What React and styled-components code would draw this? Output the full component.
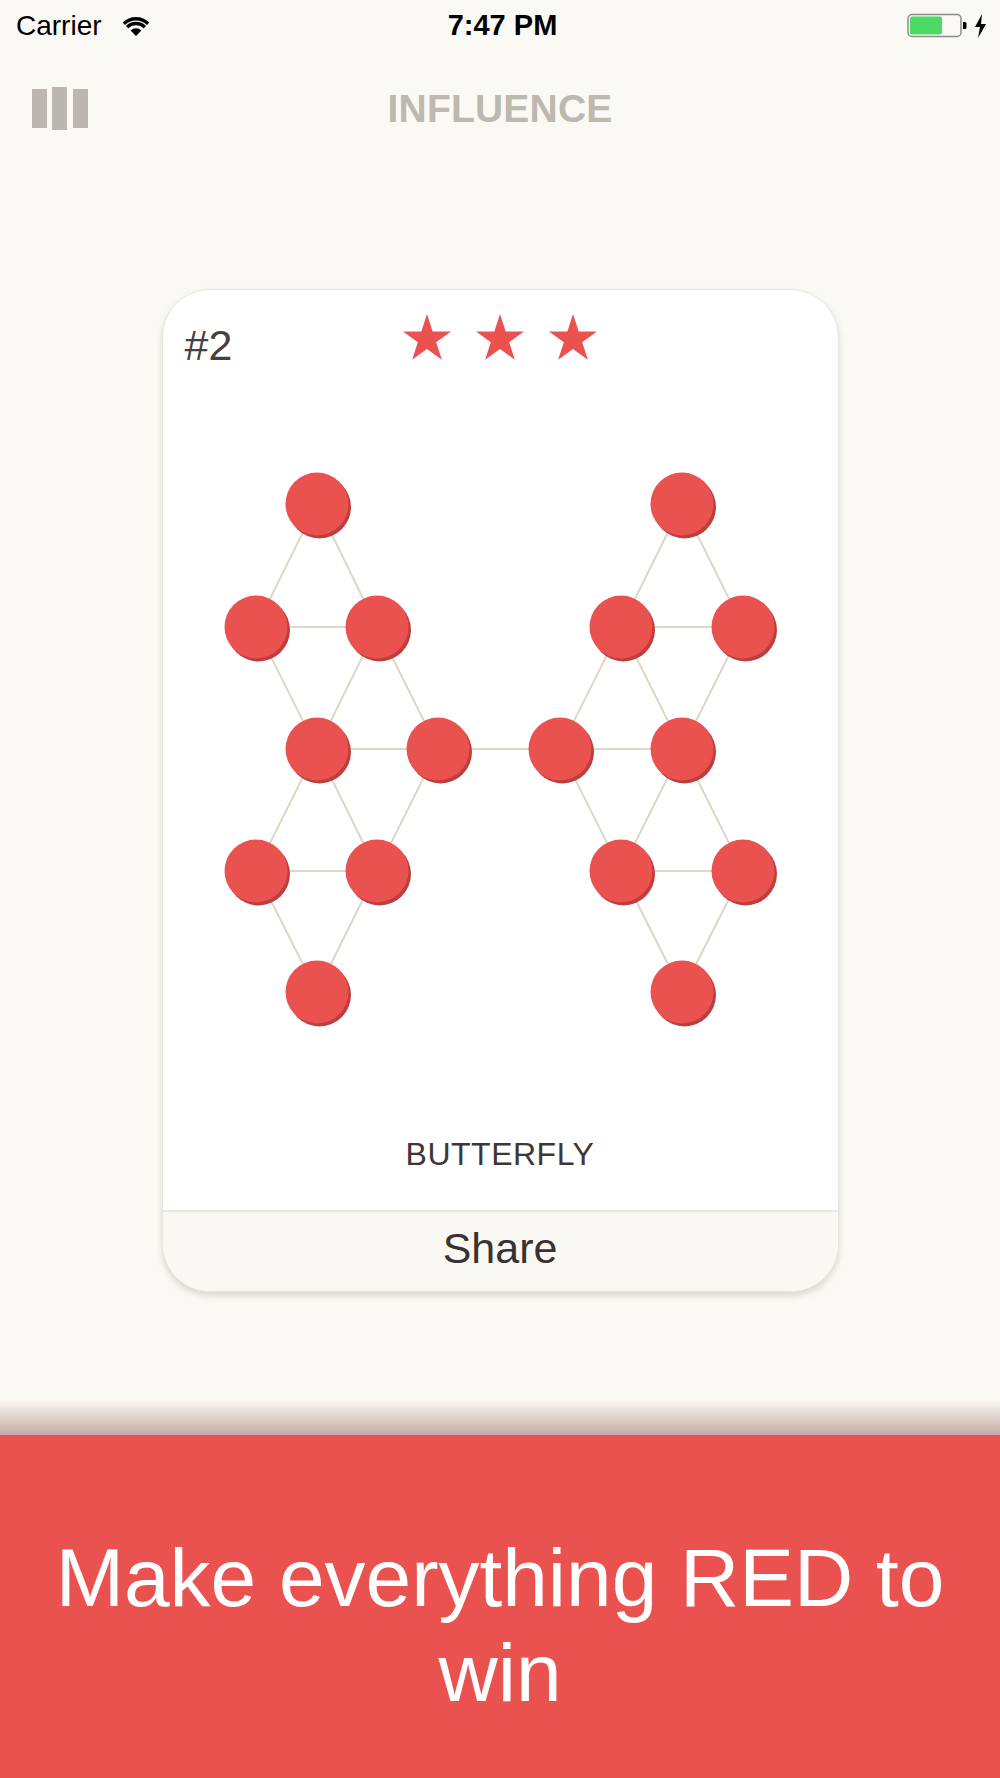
import styled, { createGlobalStyle } from 'styled-components'

const GlobalStyle = createGlobalStyle`
  html, body {
    margin: 0;
    padding: 0;
    background: #faf9f3;
  }
  body {
    font-family: 'Liberation Sans', Arial, sans-serif;
  }
`

const red = '#ea5250'

const Page = styled.div`
  width: 1000px;
  height: 1778px;
  display: flex;
  flex-direction: column;
  background: #faf9f3;
  overflow: hidden;
`

const StatusBar = styled.div`
  height: 48px;
  box-sizing: border-box;
  display: grid;
  grid-template-columns: 1fr auto 1fr;
  align-items: center;
  padding: 3px 11px 0 16px;
  color: #000;
  font-size: 28px;
`

const Carrier = styled.div`
  display: flex;
  align-items: center;
  gap: 20px;
`

const Clock = styled.div`
  font-weight: 700;
  font-size: 29px;
`

const Power = styled.div`
  display: flex;
  align-items: center;
  justify-content: flex-end;
`

const NavBar = styled.div`
  height: 122px;
  display: grid;
  grid-template-columns: 1fr auto 1fr;
  align-items: center;
  padding: 0 32px;
`

const Title = styled.h1`
  margin: 0;
  font-size: 39px;
  font-weight: 700;
  color: #bdb8b0;
  letter-spacing: 0.2px;
`

const Main = styled.main`
  flex: 1;
  display: flex;
  justify-content: center;
  padding-top: 119px;
`

const Card = styled.section`
  width: 677px;
  height: 1003px;
  box-sizing: border-box;
  display: flex;
  flex-direction: column;
  background: #fff;
  border: 1.5px solid #e8e5de;
  border-radius: 48px;
  box-shadow: 0 4px 6px rgba(60, 50, 40, 0.16);
  overflow: hidden;
`

const CardTop = styled.div`
  height: 100px;
  box-sizing: border-box;
  display: grid;
  grid-template-columns: 1fr auto 1fr;
  align-items: start;
  padding: 24px 22px 0;
`

const LevelNumber = styled.div`
  margin-top: 7px;
  font-size: 43px;
  line-height: 48px;
  color: #4a4040;
`

const Stars = styled.div`
  display: flex;
  gap: 25px;
`

const Graph = styled.svg`
  display: block;
  width: 677px;
  height: 720px;
`

const LevelName = styled.div`
  height: 88px;
  margin-bottom: 12px;
  line-height: 88px;
  text-align: center;
  font-size: 32px;
  color: #3f3636;
  letter-spacing: 0.5px;
`

const ShareButton = styled.button`
  flex: 1;
  border: none;
  border-top: 2px solid #e9e7e1;
  background: #faf8f2;
  font-family: 'Liberation Sans', Arial, sans-serif;
  font-size: 43px;
  color: #3a3232;
  padding: 0 0 6px;
  cursor: pointer;
`

const Shade = styled.div`
  height: 35px;
  background: linear-gradient(to bottom, rgba(120, 60, 55, 0), rgba(120, 60, 55, 0.42));
`

const Banner = styled.footer`
  height: 343px;
  box-sizing: border-box;
  background: ${red};
  display: flex;
  justify-content: center;
  align-items: flex-start;
  padding: 95px 40px 0;
`

const BannerText = styled.p`
  margin: 0;
  color: #fff;
  font-size: 82px;
  line-height: 95px;
  text-align: center;
`

function Wifi() {
  return (
    <svg width="28" height="22" viewBox="0 0 28 22">
      <path d="M14 21 L8.6 15.6 A7.6 7.6 0 0 1 19.4 15.6 Z" fill="#000" />
      <path d="M5.2 12.2 A12.4 12.4 0 0 1 22.8 12.2" stroke="#000" strokeWidth="3.4" fill="none" />
      <path d="M1.8 8.8 A17.2 17.2 0 0 1 26.2 8.8" stroke="#000" strokeWidth="3.4" fill="none" />
    </svg>
  )
}

function Battery() {
  return (
    <svg width="82" height="26" viewBox="0 0 82 26">
      <rect x="1" y="1.5" width="53" height="22" rx="4" fill="none" stroke="#8a8a8a" strokeWidth="1.5" />
      <rect x="3" y="3.5" width="32" height="18" rx="2" fill="#4cd964" />
      <path d="M56 9 h2 a1.5 1.5 0 0 1 1.5 1.5 v4 a1.5 1.5 0 0 1 -1.5 1.5 h-2 Z" fill="#000" />
      <path d="M75 1 L68 14 H73 L71 25 L79 11 H74 Z" fill="#000" />
    </svg>
  )
}

function LevelsIcon() {
  return (
    <svg width="56" height="44" viewBox="0 0 56 44">
      <rect x="0" y="2" width="15" height="39" fill="#bbb6af" />
      <rect x="20" y="0" width="15" height="43" fill="#bbb6af" />
      <rect x="41" y="2" width="15" height="39" fill="#bbb6af" />
    </svg>
  )
}

function Star() {
  return (
    <svg width="48" height="46" viewBox="0 0 25.2 24.1">
      <polygon
        points="12.6,0 15.58,9.17 25.22,9.17 17.42,14.84 20.4,24.01 12.6,18.34 4.8,24.01 7.78,14.84 0,9.17 9.62,9.17"
        fill={red}
      />
    </svg>
  )
}

// graph coordinates, relative to the card (svg starts 100px below card top)
const X = [93, 154, 214, 275, 397, 458, 519, 580]
const Y = [114, 237, 359, 481, 602]

const nodes = [
  [1, 0], [0, 1], [2, 1], [1, 2], [3, 2], [0, 3], [2, 3], [1, 4],
  [6, 0], [5, 1], [7, 1], [4, 2], [6, 2], [5, 3], [7, 3], [6, 4],
]

const edges = [
  [0, 1], [0, 2], [1, 2], [1, 3], [2, 3], [2, 4], [3, 4],
  [3, 5], [3, 6], [4, 6], [5, 6], [5, 7], [6, 7],
  [4, 11],
  [8, 9], [8, 10], [9, 10], [9, 11], [9, 12], [10, 12], [11, 12],
  [11, 13], [12, 13], [12, 14], [13, 14], [13, 15], [14, 15],
]

function Butterfly() {
  const pos = nodes.map(([i, j]) => [X[i], Y[j]])
  return (
    <Graph viewBox="0 0 677 720">
      {edges.map(([a, b], k) => (
        <line
          key={k}
          x1={pos[a][0]}
          y1={pos[a][1]}
          x2={pos[b][0]}
          y2={pos[b][1]}
          stroke="#dbd8c8"
          strokeWidth="2"
        />
      ))}
      {pos.map(([x, y], k) => (
        <g key={k}>
          <circle cx={x + 2.5} cy={y + 3} r="31.5" fill="#bd3e3d" />
          <circle cx={x} cy={y} r="31.5" fill={red} />
        </g>
      ))}
    </Graph>
  )
}

export default function App() {
  return (
    <Page>
      <GlobalStyle />
      <StatusBar>
        <Carrier>
          Carrier
          <Wifi />
        </Carrier>
        <Clock>7:47 PM</Clock>
        <Power>
          <Battery />
        </Power>
      </StatusBar>
      <NavBar>
        <LevelsIcon />
        <Title>INFLUENCE</Title>
        <div />
      </NavBar>
      <Main>
        <Card>
          <CardTop>
            <LevelNumber>#2</LevelNumber>
            <Stars>
              <Star />
              <Star />
              <Star />
            </Stars>
            <div />
          </CardTop>
          <Butterfly />
          <LevelName>BUTTERFLY</LevelName>
          <ShareButton>Share</ShareButton>
        </Card>
      </Main>
      <Shade />
      <Banner>
        <BannerText>Make everything RED to win</BannerText>
      </Banner>
    </Page>
  )
}
